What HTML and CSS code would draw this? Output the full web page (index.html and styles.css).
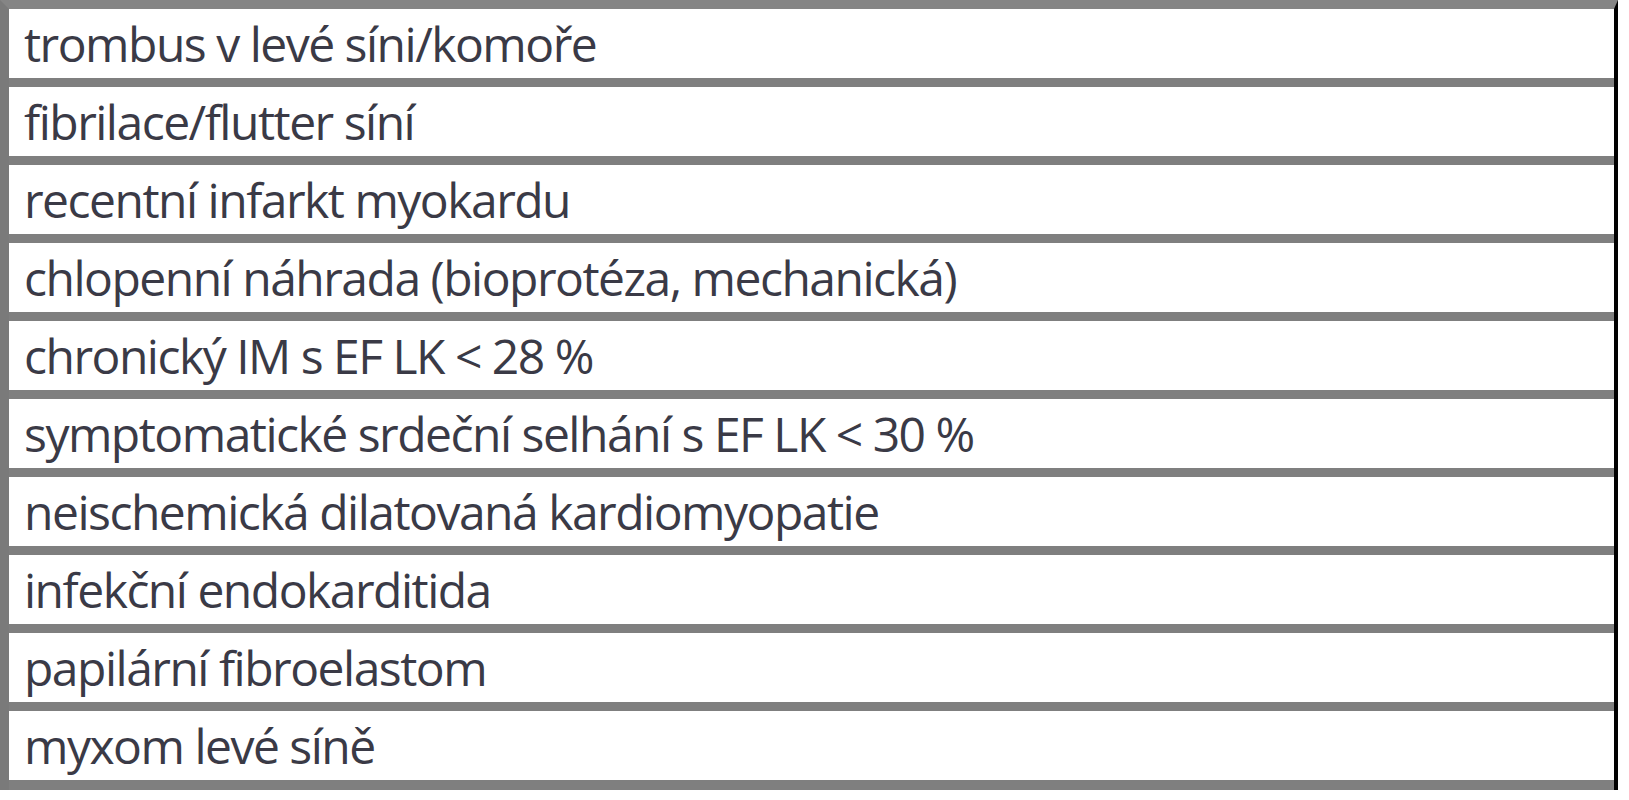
FILE: index.html
```html
<!DOCTYPE html>
<html lang="cs">
<head>
<meta charset="utf-8">
<link rel="stylesheet" href="styles.css">
</head>
<body>
<div class="table">
  <div class="row">trombus v levé síni/komoře</div>
  <div class="row">fibrilace/flutter síní</div>
  <div class="row">recentní infarkt myokardu</div>
  <div class="row">chlopenní náhrada (bioprotéza, mechanická)</div>
  <div class="row">chronický IM s EF LK &lt; 28 %</div>
  <div class="row">symptomatické srdeční selhání s EF LK &lt; 30 %</div>
  <div class="row">neischemická dilatovaná kardiomyopatie</div>
  <div class="row">infekční endokarditida</div>
  <div class="row">papilární fibroelastom</div>
  <div class="row">myxom levé síně</div>
</div>
</body>
</html>
```

FILE: styles.css
```css
html, body {
  margin: 0;
  padding: 0;
  background: #ffffff;
}

.table {
  width: 1618px;
  box-sizing: border-box;
  display: flex;
  flex-direction: column;
  border-top: 9px solid #858585;
  border-left: 9px solid #7a7a7a;
  border-right: 4px solid #000000;
}

.row {
  height: 69px;
  line-height: 69px;
  padding-left: 15px;
  border-bottom: 9px solid #7f7f7f;
  font-family: "Open Sans", "Noto Sans", sans-serif;
  font-size: 48px;
  letter-spacing: -1.5px;
  color: #3a3a46;
  white-space: nowrap;
}

.row:last-child {
  border-bottom-width: 10px;
}
```
